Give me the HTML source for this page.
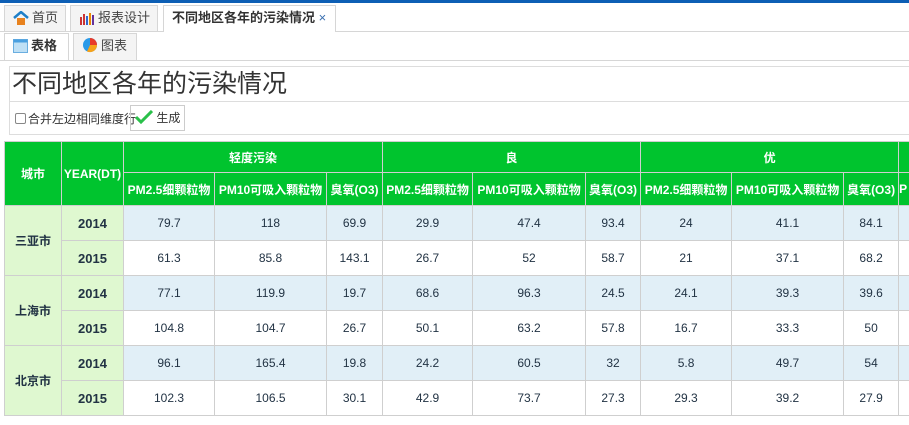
<!DOCTYPE html>
<html><head><meta charset="utf-8"><style>
*{margin:0;padding:0;box-sizing:border-box}
body{width:909px;height:425px;overflow:hidden;background:#fff;font-family:"Liberation Sans","Noto Sans CJK SC",sans-serif;position:relative;color:#333}
.bar{position:absolute;left:0;top:0;width:909px;height:3px;background:#0d5fb5}
.line{position:absolute;left:0;width:909px;height:1px;background:#d6d6d6}
.tab{position:absolute;border:1px solid #d6d6d6;border-bottom:none;background:#f4f4f4;font-size:13px;line-height:24px;padding-left:8px;color:#444}
.tab.act{background:#fff;height:27px}
.tab svg{vertical-align:-3px;margin-right:3px}
.box{position:absolute;left:9px;top:66px;width:920px;height:69px;border:1px solid #ddd}
.wrap{position:absolute;left:4px;top:141px;width:960px}
table{border-collapse:collapse;table-layout:fixed;font-size:12px;width:925px}
td,th{border:1px solid #cfcfcf;text-align:center;overflow:hidden;white-space:nowrap}
th{background:#00c42e;color:#fff;font-weight:bold;font-size:12px}
.c{background:#dff8d0;font-weight:bold;color:#234}
.y{background:#dff8d0;font-weight:bold;color:#234;font-size:13px}
tr.o td.d{background:#e1eff7}
td.d{color:#234;font-size:12px}
</style></head><body>
<div class="bar"></div>
<div class="line" style="top:31px"></div>
<div class="line" style="top:60px"></div>
<div class="tab" style="left:4px;top:5px;width:62px;height:26px"><svg width="16" height="14" viewBox="0 0 16 14"><path d="M1 7L8 1l7 6" stroke="#1e7fc8" stroke-width="2.5" fill="none"/><rect x="4" y="7" width="8" height="7" fill="#e8821e"/></svg>首页</div>
<div class="tab" style="left:70px;top:5px;width:88px;height:26px"><svg width="16" height="14" viewBox="0 0 16 14"><rect x="1" y="6" width="2" height="8" fill="#c33"/><rect x="4" y="3" width="2" height="11" fill="#c33"/><rect x="7" y="5" width="2" height="9" fill="#36c"/><rect x="10" y="2" width="2" height="12" fill="#e80"/><rect x="13" y="4" width="2" height="10" fill="#639"/></svg>报表设计</div>
<div class="tab act" style="left:163px;top:5px;width:173px;font-weight:bold;color:#333">不同地区各年的污染情况 <span style="font-weight:normal;color:#3a6fb0">×</span></div>
<div class="tab act" style="left:4px;top:33px;width:65px;font-weight:bold;color:#333"><svg width="15" height="14" viewBox="0 0 15 14"><rect x="0.5" y="0.5" width="14" height="13" fill="#bfe0f5" stroke="#6aaee0"/><rect x="0.5" y="0.5" width="14" height="3" fill="#4aa0e0"/></svg>表格</div>
<div class="tab" style="left:73px;top:33px;width:64px;height:27px"><svg width="16" height="16" viewBox="0 0 16 16"><circle cx="8" cy="8" r="7" fill="#2a9ae8"/><path d="M8 8V1A7 7 0 0 1 15 8z" fill="#e83a2a"/><path d="M8 8h7A7 7 0 0 1 5 14.5z" fill="#f6a21a"/></svg>图表</div>
<div class="box"><div style="font-size:25px;line-height:34px;padding-left:2px;color:#333">不同地区各年的污染情况</div>
<div style="border-top:1px solid #ddd;height:32px;position:relative">
<span style="position:absolute;left:5px;top:11px;width:11px;height:11px;border:1px solid #888;border-radius:2px;background:#fff"></span>
<span style="position:absolute;left:18px;top:8px;font-size:12px">合并左边相同维度行</span>
<span style="position:absolute;left:120px;top:3px;width:55px;height:26px;border:1px solid #ccc;font-size:12px;line-height:24px;padding-left:4px"><svg width="18" height="14" viewBox="0 0 18 14" style="vertical-align:-2px"><path d="M1 7l5 5L17 1" stroke="#2ac04a" stroke-width="3" fill="none"/></svg> 生成</span>
</div></div>
<div class="wrap"><table>
<colgroup><col style="width:57px"><col style="width:62px"><col style="width:91px"><col style="width:112px"><col style="width:56px"><col style="width:90px"><col style="width:113px"><col style="width:55px"><col style="width:91px"><col style="width:112px"><col style="width:55px"><col style="width:31px"></colgroup>
<tr style="height:31px"><th rowspan="2">城市</th><th rowspan="2">YEAR(DT)</th><th colspan="3">轻度污染</th><th colspan="3">良</th><th colspan="3">优</th><th></th></tr>
<tr style="height:33px"><th>PM2.5细颗粒物</th><th>PM10可吸入颗粒物</th><th>臭氧(O3)</th><th>PM2.5细颗粒物</th><th>PM10可吸入颗粒物</th><th>臭氧(O3)</th><th>PM2.5细颗粒物</th><th>PM10可吸入颗粒物</th><th>臭氧(O3)</th><th style="text-align:left">P</th></tr>
<tr class="o" style="height:35px"><td rowspan="2" class="c">三亚市</td><td class="y">2014</td><td class="d">79.7</td><td class="d">118</td><td class="d">69.9</td><td class="d">29.9</td><td class="d">47.4</td><td class="d">93.4</td><td class="d">24</td><td class="d">41.1</td><td class="d">84.1</td><td class="d"></td></tr>
<tr style="height:35px"><td class="y">2015</td><td class="d">61.3</td><td class="d">85.8</td><td class="d">143.1</td><td class="d">26.7</td><td class="d">52</td><td class="d">58.7</td><td class="d">21</td><td class="d">37.1</td><td class="d">68.2</td><td class="d"></td></tr>
<tr class="o" style="height:35px"><td rowspan="2" class="c">上海市</td><td class="y">2014</td><td class="d">77.1</td><td class="d">119.9</td><td class="d">19.7</td><td class="d">68.6</td><td class="d">96.3</td><td class="d">24.5</td><td class="d">24.1</td><td class="d">39.3</td><td class="d">39.6</td><td class="d"></td></tr>
<tr style="height:35px"><td class="y">2015</td><td class="d">104.8</td><td class="d">104.7</td><td class="d">26.7</td><td class="d">50.1</td><td class="d">63.2</td><td class="d">57.8</td><td class="d">16.7</td><td class="d">33.3</td><td class="d">50</td><td class="d"></td></tr>
<tr class="o" style="height:35px"><td rowspan="2" class="c">北京市</td><td class="y">2014</td><td class="d">96.1</td><td class="d">165.4</td><td class="d">19.8</td><td class="d">24.2</td><td class="d">60.5</td><td class="d">32</td><td class="d">5.8</td><td class="d">49.7</td><td class="d">54</td><td class="d"></td></tr>
<tr style="height:35px"><td class="y">2015</td><td class="d">102.3</td><td class="d">106.5</td><td class="d">30.1</td><td class="d">42.9</td><td class="d">73.7</td><td class="d">27.3</td><td class="d">29.3</td><td class="d">39.2</td><td class="d">27.9</td><td class="d"></td></tr>
</table></div>
</body></html>
